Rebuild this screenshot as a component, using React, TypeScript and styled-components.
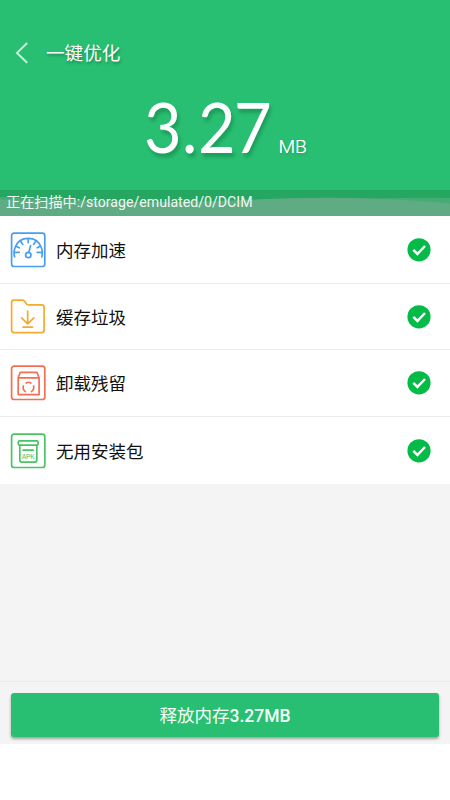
import React from "react";
import styled, { createGlobalStyle } from "styled-components";

const Global = createGlobalStyle`
  * { box-sizing: border-box; }
  body { margin: 0; background: #fff; font-family: Roboto, "Noto Sans CJK SC", sans-serif; }
`;
const Screen = styled.main`
  width: 450px;
  height: 800px;
  display: flex;
  flex-direction: column;
  overflow: hidden;
  background: #fff;
`;
const Hero = styled.header`
  height: 190px;
  background: #29bf72;
  color: #fff;
  display: flex;
  flex-direction: column;
`;
const TitleBar = styled.div`
  height: 46px;
  margin-top: 30px;
  padding-left: 14px;
  display: flex;
  align-items: center;
  gap: 16px;
  svg { flex: none; }
`;
const Title = styled.h1`
  margin: 0;
  padding-top: 1px;
  font-size: 18.6px;
  line-height: 28px;
  font-weight: 400;
  text-shadow: 1px 2px 3px rgba(0, 70, 30, 0.45);
`;
const Amount = styled.div`
  display: flex;
  align-items: baseline;
  padding-left: 144px;
  height: 100px;
  line-height: 102px;
`;
const Value = styled.span`
  width: 134.5px;
  white-space: nowrap;
  font-family: Lato, sans-serif;
  font-size: 69px;
  letter-spacing: -1.9px;
  transform: scaleX(0.94);
  transform-origin: left;
  text-shadow: 2px 4px 4px rgba(0, 80, 40, 0.32);
`;
const Point = styled.span`
  padding: 0 2.6px 0 2.4px;
`;
const Unit = styled.span`
  font-size: 19.2px;
  font-weight: 300;
  text-shadow: 1px 2px 3px rgba(0, 80, 40, 0.25), 0 0 0.6px #fff;
`;
const ScanStrip = styled.div`
  height: 26px;
  display: grid;
  background: #25a762;
  color: #f0faf4;
  font-size: 14.15px;
  line-height: 24px;
  > * { grid-area: 1 / 1; }
  span { padding-left: 6px; z-index: 1; }
`;
const List = styled.ul`
  margin: 0;
  padding: 0;
  list-style: none;
`;
const Row = styled.li<{ $height: number }>`
  height: ${(p) => p.$height}px;
  padding: 0 19px 0 10px;
  display: flex;
  align-items: center;
  background: #fff;
  border-bottom: 1px solid #ebebeb;
  svg { flex: none; }
  &:last-child { border-bottom: 0; }
`;
const Label = styled.span`
  flex: 1;
  padding: 2px 0 0 10px;
  font-size: 17.5px;
  line-height: 26px;
  color: #111;
`;
const Filler = styled.div`
  height: 198px;
  background: #f4f4f4;
  border-bottom: 1px solid #ebebeb;
`;
const Footer = styled.footer`
  height: 61.5px;
  padding: 11px 11px 0;
  background: #f4f4f4;
`;
const Button = styled.button`
  display: block;
  width: 100%;
  height: 44px;
  border: 0;
  padding: 2px 0 0;
  border-radius: 3px;
  background: #29bf72;
  color: #f4fff8;
  font-family: inherit;
  font-size: 17.5px;
  font-weight: 400;
  line-height: 42px;
  box-shadow: 0 2px 3px rgba(0, 0, 0, 0.35);
  b { font-weight: 500; }
`;

const Svg = ({ color, children }: { color: string; children: React.ReactNode }) => (
  <svg width="36" height="36" viewBox="0 0 36 36" fill="none" stroke={color} strokeWidth="1.7" strokeLinecap="round" strokeLinejoin="round">
    {children}
  </svg>
);
const Frame = () => <rect x="1.6" y="1.2" width="33.2" height="33.3" rx="2.5" />;

const Gauge = () => (
  <Svg color="#4a9df0">
    <Frame />
    <path d="M4.6 24.8C4 22.8 4 18.5 5 15.8C7 10 12 6.4 18.2 6.4S29.4 10 31.4 15.8C32.4 18.5 32.4 22.8 31.8 24.8" />
    <path d="M18.2 6.8v3.8M10.8 9.6l2 2.8M25.6 9.6l-2 2.8M6.2 14.2l3 1.6M30.2 14.2l-3 1.6M4.8 20.3h4.4M27.2 20.3h4.4M18.8 20.2l1.8-6.6" />
    <circle cx="18.3" cy="23" r="2.7" />
  </Svg>
);
const Folder = () => (
  <Svg color="#f2ab2c">
    <path d="M4 1.2h8.4c1 0 1.6.5 2.2 1.2l2 2.6c.5.6 1 .8 1.8.8h13.2c1.5 0 2.5 1 2.5 2.5v23c0 1.5-1 2.3-2.4 2.3H4c-1.5 0-2.4-.8-2.4-2.3V3.6c0-1.5.9-2.4 2.4-2.4Z" />
    <path d="M17.7 12.1v12.6M11.6 18.9l6.1 6 6.1-6M13 28.1h9.6" />
  </Svg>
);
const Bin = () => (
  <Svg color="#f46e54">
    <Frame />
    <path d="M8.2 12.8h20.9v16.8H8.2ZM8.2 12.8l2.1-5.5h16.6l2.2 5.5" />
    <path d="M16.2 18c1.4-.9 3.2-.9 4.6 0M23.6 21c.5 2.1-.4 4.4-2.2 5.6M15.4 26.6c-1.7-1.2-2.6-3.5-2.1-5.6" />
  </Svg>
);
const Apk = () => (
  <Svg color="#4ac364">
    <Frame />
    <rect x="8.3" y="7.8" width="19.8" height="4.4" rx="1.4" />
    <path d="M9.8 12.4v14.7c0 1.3.7 2 2 2h13c1.3 0 2-.7 2-2V12.4M13.2 17.2h10" />
    <text x="18.2" y="26.3" textAnchor="middle" textLength="13" fontFamily="Roboto, sans-serif" fontSize="7" fill="#4ac364" stroke="none">APK</text>
  </Svg>
);
const Check = () => (
  <svg width="24" height="24" viewBox="0 0 24 24" fill="none">
    <circle cx="12" cy="11.8" r="11.6" fill="#04bb48" />
    <path d="M6.3 11.9l4.1 4.1 7.6-8" stroke="#fff" strokeWidth="2.5" />
  </svg>
);

const rows = [
  { label: "内存加速", icon: <Gauge />, height: 68 },
  { label: "缓存垃圾", icon: <Folder />, height: 66 },
  { label: "卸载残留", icon: <Bin />, height: 67 },
  { label: "无用安装包", icon: <Apk />, height: 67 },
];

export default function App() {
  return (
    <Screen>
      <Global />
      <Hero>
        <TitleBar>
          <svg width="16" height="24" viewBox="0 0 16 24" fill="none">
            <path d="M12.6 2.5L3 11.9l9.6 9.4" stroke="#c6f0d8" strokeWidth="2" strokeLinecap="round" />
          </svg>
          <Title>一键优化</Title>
        </TitleBar>
        <Amount>
          <Value>3<Point>.</Point>27</Value>
          <Unit>MB</Unit>
        </Amount>
      </Hero>
      <ScanStrip>
        <svg width="450" height="26" viewBox="0 0 450 26">
          <path d="M0 7Q70 8 130 13H0ZM300 12Q380 7 450 8V26H300Z" fill="#45ac74" />
          <path d="M0 9.5Q65 10 130 12Q210 12 265 9Q330 6.5 385 9Q425 11 450 13.5V26H0Z" fill="#5fab84" />
        </svg>
        <span>正在扫描中:/storage/emulated/0/DCIM</span>
      </ScanStrip>
      <List>
        {rows.map((r) => (
          <Row key={r.label} $height={r.height}>
            {r.icon}
            <Label>{r.label}</Label>
            <Check />
          </Row>
        ))}
      </List>
      <Filler />
      <Footer>
        <Button>释放内存<b>3.27MB</b></Button>
      </Footer>
    </Screen>
  );
}
